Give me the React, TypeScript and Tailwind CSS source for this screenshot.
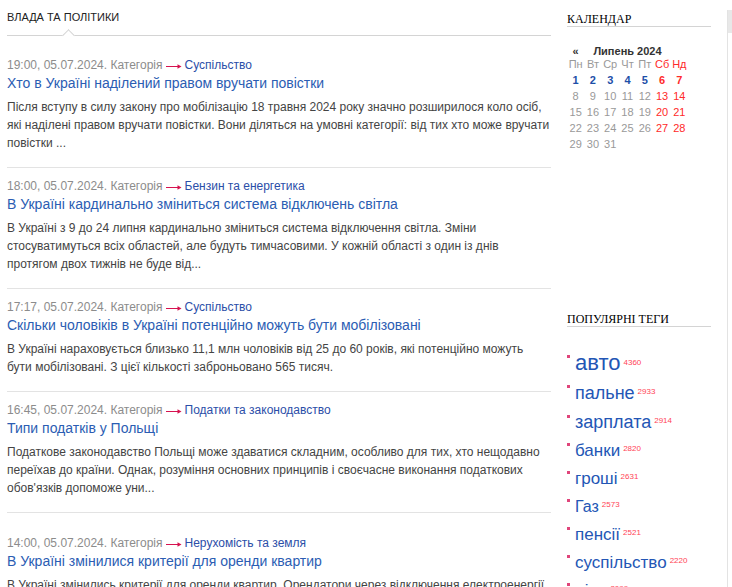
const posts = [
  {
    time: "19:00, 05.07.2024.",
    cat: "Суспільство",
    title: "Хто в Україні наділений правом вручати повістки",
    text: "Після вступу в силу закону про мобілізацію 18 травня 2024 року значно розширилося коло осіб, які наділені правом вручати повістки. Вони діляться на умовні категорії: від тих хто може вручати повістки ...",
  },
  {
    time: "18:00, 05.07.2024.",
    cat: "Бензин та енергетика",
    title: "В Україні кардинально зміниться система відключень світла",
    text: "В Україні з 9 до 24 липня кардинально зміниться система відключення світла. Зміни стосуватимуться всіх областей, але будуть тимчасовими. У кожній області з один із днів протягом двох тижнів не буде від...",
  },
  {
    time: "17:17, 05.07.2024.",
    cat: "Суспільство",
    title: "Скільки чоловіків в Україні потенційно можуть бути мобілізовані",
    text: "В Україні нараховується близько 11,1 млн чоловіків від 25 до 60 років, які потенційно можуть бути мобілізовані. З цієї кількості заброньовано 565 тисяч.",
  },
  {
    time: "16:45, 05.07.2024.",
    cat: "Податки та законодавство",
    title: "Типи податків у Польщі",
    text: "Податкове законодавство Польщі може здаватися складним, особливо для тих, хто нещодавно переїхав до країни. Однак, розуміння основних принципів і своєчасне виконання податкових обов'язків допоможе уни...",
  },
  {
    time: "14:00, 05.07.2024.",
    cat: "Нерухомість та земля",
    title: "В Україні змінилися критерії для оренди квартир",
    text: "В Україні змінились критерії для оренди квартир. Орендатори через відключення електроенергії шукають житло з генераторами та зарядними станціями...",
  },
];

const tags = [
  { name: "авто", count: 4360, size: "text-[22px]", h: "h-[31px]" },
  { name: "пальне", count: 2933, size: "text-[18px]", h: "h-[30px]" },
  { name: "зарплата", count: 2914, size: "text-[18px]", h: "h-[29px]" },
  { name: "банки", count: 2820, size: "text-[17px]", h: "h-[28px]" },
  { name: "гроші", count: 2631, size: "text-[17px]", h: "h-[28px]" },
  { name: "Газ", count: 2573, size: "text-[16px]", h: "h-[28px]" },
  { name: "пенсії", count: 2521, size: "text-[17px]", h: "h-[28px]" },
  { name: "суспільство", count: 2220, size: "text-[17px]", h: "h-[28px]" },
  { name: "ціни", count: 2099, size: "text-[17px]", h: "h-[28px]" },
];

const weekDays = ["Пн", "Вт", "Ср", "Чт", "Пт", "Сб", "Нд"];
const days = Array.from({ length: 31 }, (_, i) => i + 1);

function Arrow() {
  return (
    <svg width="16" height="7" viewBox="0 0 16 7" className="mx-[3px] mt-[3px]">
      <line x1="0" y1="3.5" x2="12" y2="3.5" stroke="#d6124f" strokeWidth="1" />
      <path d="M11.5 1.2 L15.5 3.5 L11.5 5.8 Z" fill="#d6124f" />
    </svg>
  );
}

export default function App() {
  return (
    <div className="h-[587px] overflow-hidden bg-white flex font-['Liberation_Sans',Arial,sans-serif]">
      {/* Main column */}
      <div className="w-[544px] ml-[7px] shrink-0">
        <div className="relative pt-[10px] pb-[11px] border-b border-[#d4d4d4]">
          <h2 className="text-[11px] leading-[14px] text-[#222] uppercase">Влада та політики</h2>
          <div className="absolute left-[57px] -bottom-[5px] w-[9px] h-[9px] bg-white border-l border-t border-[#d4d4d4] rotate-45" />
        </div>

        <div className="mt-[11px]">
          {posts.map((p, i) => (
            <div
              key={i}
              className={`${i === posts.length - 1 ? "pt-[21px]" : "pt-[9px]"} pb-[15px] ${
                i < posts.length - 1 ? "border-b border-[#e3e3e3]" : ""
              }`}
            >
              <div className="flex items-center text-[12px] leading-[18px]">
                <span className="text-[#8c8c8c]">{p.time} Категорія</span>
                <Arrow />
                <span className="text-[#2b4ea8]">{p.cat}</span>
              </div>
              <h3 className="text-[14px] leading-[18px] text-[#2b5db3]">{p.title}</h3>
              <p className="mt-[6px] text-[12px] leading-[18px] text-[#444]">{p.text}</p>
            </div>
          ))}
        </div>
      </div>

      {/* Sidebar */}
      <div className="w-[144px] ml-[16px] shrink-0">
        <h2 className="mt-[13px] text-[12px] leading-[13px] uppercase text-black font-['Liberation_Serif',serif] border-b border-[#d4d4d4]">
          Календар
        </h2>

        <div className="mt-[18px] w-[121px] grid grid-cols-7 text-[11px] text-center">
          <div className="leading-[12px] font-bold text-[#333]">«</div>
          <div className="col-span-5 leading-[12px] font-bold text-[#333]">Липень 2024</div>
          <div />
          {weekDays.map((d, i) => (
            <div key={d} className={`leading-[15px] ${i > 4 ? "text-[#ff2a2a]" : "text-[#999]"}`}>
              {d}
            </div>
          ))}
          {days.map((d) => {
            const weekend = (d - 1) % 7 > 4;
            const linked = d <= 7;
            return (
              <div
                key={d}
                className={`leading-[16px] ${linked ? "font-bold" : ""} ${
                  weekend ? "text-[#ff2a2a]" : linked ? "text-[#1d4fa8]" : "text-[#999]"
                }`}
              >
                {d}
              </div>
            );
          })}
        </div>

        <h2 className="mt-[161px] text-[12px] leading-[13px] uppercase text-black font-['Liberation_Serif',serif] border-b border-[#d4d4d4]">
          Популярні теги
        </h2>

        <ul className="mt-[20px]">
          {tags.map((t) => (
            <li key={t.name} className={`flex items-center ${t.h}`}>
              <span className="w-[3px] h-[3px] bg-[#e0457b] mb-[13px] mr-[5px] shrink-0" />
              <span className="whitespace-nowrap">
                <span className={`${t.size} text-[#2356b5]`}>{t.name}</span>
                <span className="ml-[3px] text-[8px] text-[#ff4456] align-[5px]">{t.count}</span>
              </span>
            </li>
          ))}
        </ul>
      </div>

      {/* Partially visible side panel */}
      <div className="ml-[16px] mt-[10px] flex-1 border-l border-[#e3e3e3]">
        <div className="h-[23px] bg-[#e8e8e8]" />
      </div>
    </div>
  );
}
